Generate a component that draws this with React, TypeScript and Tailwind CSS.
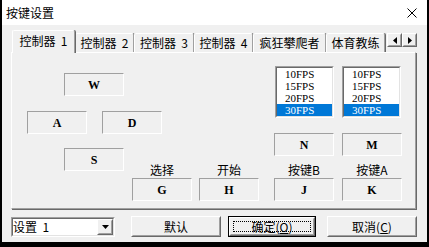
import React from "react";

const cjk = "font-['Noto_Sans_CJK_SC',sans-serif]";

const KeyBox = ({ label }: { label: string }) => (
  <div className="w-[60px] h-[23px] flex items-center justify-center border border-t-[#a0a0a0] border-l-[#a0a0a0] border-r-white border-b-white font-['Liberation_Serif',serif] font-bold text-[12px] leading-none text-black">
    {label}
  </div>
);

const FpsList = () => {
  const items = ["10FPS", "15FPS", "20FPS", "30FPS"];
  return (
    <div className="w-[59px] h-[52px] border border-t-[#a0a0a0] border-l-[#a0a0a0] border-r-white border-b-white">
      <div className="w-full h-full border border-t-[#696969] border-l-[#696969] border-r-[#e3e3e3] border-b-[#e3e3e3] bg-white">
        {items.map((it) => (
          <div
            key={it}
            className={`h-[12px] overflow-hidden pl-[8px] leading-[12px] font-['Liberation_Serif',serif] text-[11px] ${
              it === "30FPS" ? "bg-[#0078d7] text-white" : "text-black"
            }`}
          >
            {it}
          </div>
        ))}
      </div>
    </div>
  );
};

const Raised = ({ className = "", children }: { className?: string; children?: React.ReactNode }) => (
  <div className={`border border-t-white border-l-white border-r-[#696969] border-b-[#696969] bg-[#f0f0f0] ${className}`}>
    <div className="w-full h-full border border-t-[#f0f0f0] border-l-[#f0f0f0] border-r-[#a0a0a0] border-b-[#a0a0a0] flex items-center justify-center">
      {children}
    </div>
  </div>
);

const Tab = ({ label, width, selected }: { label: string; width: string; selected?: boolean }) => (
  <div
    className={`${width} ${
      selected ? "h-[23px] -mb-[1px] relative z-10 pb-[2px]" : "h-[19px]"
    } flex items-center justify-center whitespace-pre border-l border-t border-l-white border-t-white border-r border-r-[#a0a0a0] rounded-tl-[2px] rounded-tr-[2px] bg-[#f0f0f0] ${cjk} text-[12px] leading-[14px] text-black shadow-[1px_0_0_#696969]`}
  >
    {label}
  </div>
);

const Labeled = ({ label, keyName }: { label: string; keyName: string }) => (
  <div className="flex flex-col items-center w-[60px]">
    <div className={`h-[14px] leading-[14px] text-[12px] ${cjk} text-black whitespace-nowrap`}>{label}</div>
    <div className="mt-[1px]">
      <KeyBox label={keyName} />
    </div>
  </div>
);

export default function App() {
  return (
    <div className="w-[429px] h-[247px] bg-black pl-[2px] pr-[2px] pb-[5px] overflow-hidden">
      <div className="w-full h-full bg-[#f0f0f0] flex flex-col">
        {/* title bar */}
        <div className="h-[25px] bg-white flex items-center justify-between pl-[4px] pr-[10px]">
          <span className={`${cjk} text-[12px] leading-[14px] text-black`}>按键设置</span>
          <svg width="10" height="10" viewBox="0 0 10 10">
            <path d="M0.5 0.5 L9.5 9.5 M9.5 0.5 L0.5 9.5" stroke="#000" strokeWidth="1" />
          </svg>
        </div>

        {/* tabs */}
        <div className="mt-[5px] h-[22px] flex items-end pl-[10px] pr-[10px]">
          <Tab label="控制器  1" width="w-[63px]" selected />
          <Tab label="控制器  2" width="w-[59px]" />
          <Tab label="控制器  3" width="w-[60px]" />
          <Tab label="控制器  4" width="w-[59px]" />
          <Tab label="疯狂攀爬者" width="w-[73px]" />
          <Tab label="体育教练" width="w-[59px]" />
          <div className="ml-auto self-start mt-[3px] flex">
            <Raised className="w-[15px] h-[14px]">
              <svg width="4" height="7" viewBox="0 0 4 7">
                <path d="M4 0 L0 3.5 L4 7 Z" fill="#000" />
              </svg>
            </Raised>
            <Raised className="w-[15px] h-[14px]">
              <svg width="4" height="7" viewBox="0 0 4 7">
                <path d="M0 0 L4 3.5 L0 7 Z" fill="#000" />
              </svg>
            </Raised>
          </div>
        </div>

        {/* tab panel */}
        <div className="ml-[9px] w-[405px] h-[157px] border-l border-t border-l-white border-t-white border-r border-b border-r-[#a0a0a0] border-b-[#a0a0a0] shadow-[1px_1px_0_#696969]">
          <div className="flex items-start">
            <div className="flex flex-col items-start w-[150px]">
              <div className="ml-[52px] mt-[20px]">
                <KeyBox label="W" />
              </div>
              <div className="ml-[15px] mt-[15px] flex gap-[15px]">
                <KeyBox label="A" />
                <KeyBox label="D" />
              </div>
            </div>
            <div className="ml-[113px] mt-[13px] flex gap-[8px]">
              <FpsList />
              <FpsList />
            </div>
          </div>
          <div className="flex items-start">
            <div className="ml-[52px] mt-[14px]">
              <KeyBox label="S" />
            </div>
            <div className="ml-[8px] flex flex-col">
              <div className="ml-[142px] -mt-[1px] flex gap-[8px]">
                <KeyBox label="N" />
                <KeyBox label="M" />
              </div>
              <div className="mt-[7px] flex">
                <Labeled label="选择" keyName="G" />
                <div className="ml-[7px]">
                  <Labeled label="开始" keyName="H" />
                </div>
                <div className="ml-[15px]">
                  <Labeled label="按键B" keyName="J" />
                </div>
                <div className="ml-[8px]">
                  <Labeled label="按键A" keyName="K" />
                </div>
              </div>
            </div>
          </div>
        </div>

        {/* bottom row */}
        <div className="mt-[7px] ml-[9px] flex items-start">
          <div className="mt-[1px] w-[104px] h-[20px] border border-t-[#a0a0a0] border-l-[#a0a0a0] border-r-white border-b-white">
            <div className="w-full h-full border border-t-[#696969] border-l-[#696969] border-r-[#e3e3e3] border-b-[#e3e3e3] bg-white flex items-center">
              <span className={`${cjk} text-[12px] leading-[14px] text-black whitespace-pre flex-1`}>设置  1</span>
              <Raised className="w-[16px] h-[16px]">
                <svg width="7" height="4" viewBox="0 0 7 4">
                  <path d="M0 0 L7 0 L3.5 4 Z" fill="#000" />
                </svg>
              </Raised>
            </div>
          </div>
          <Raised className="ml-[16px] w-[90px] h-[21px]">
            <span className={`${cjk} text-[12px] leading-[14px] text-black`}>默认</span>
          </Raised>
          <div className="ml-[7px] w-[88px] h-[21px] border border-black">
            <Raised className="w-full h-full">
              <div className="w-full h-full p-[2px]">
                <div className={`w-full h-full border border-dotted border-black flex items-center justify-center ${cjk} text-[12px] leading-[14px] text-black`}>
                  确定(<span className="underline">O</span>)
                </div>
              </div>
            </Raised>
          </div>
          <Raised className="ml-[11px] w-[90px] h-[21px]">
            <span className={`${cjk} text-[12px] leading-[14px] text-black`}>
              取消(<span className="underline">C</span>)
            </span>
          </Raised>
        </div>
      </div>
    </div>
  );
}
